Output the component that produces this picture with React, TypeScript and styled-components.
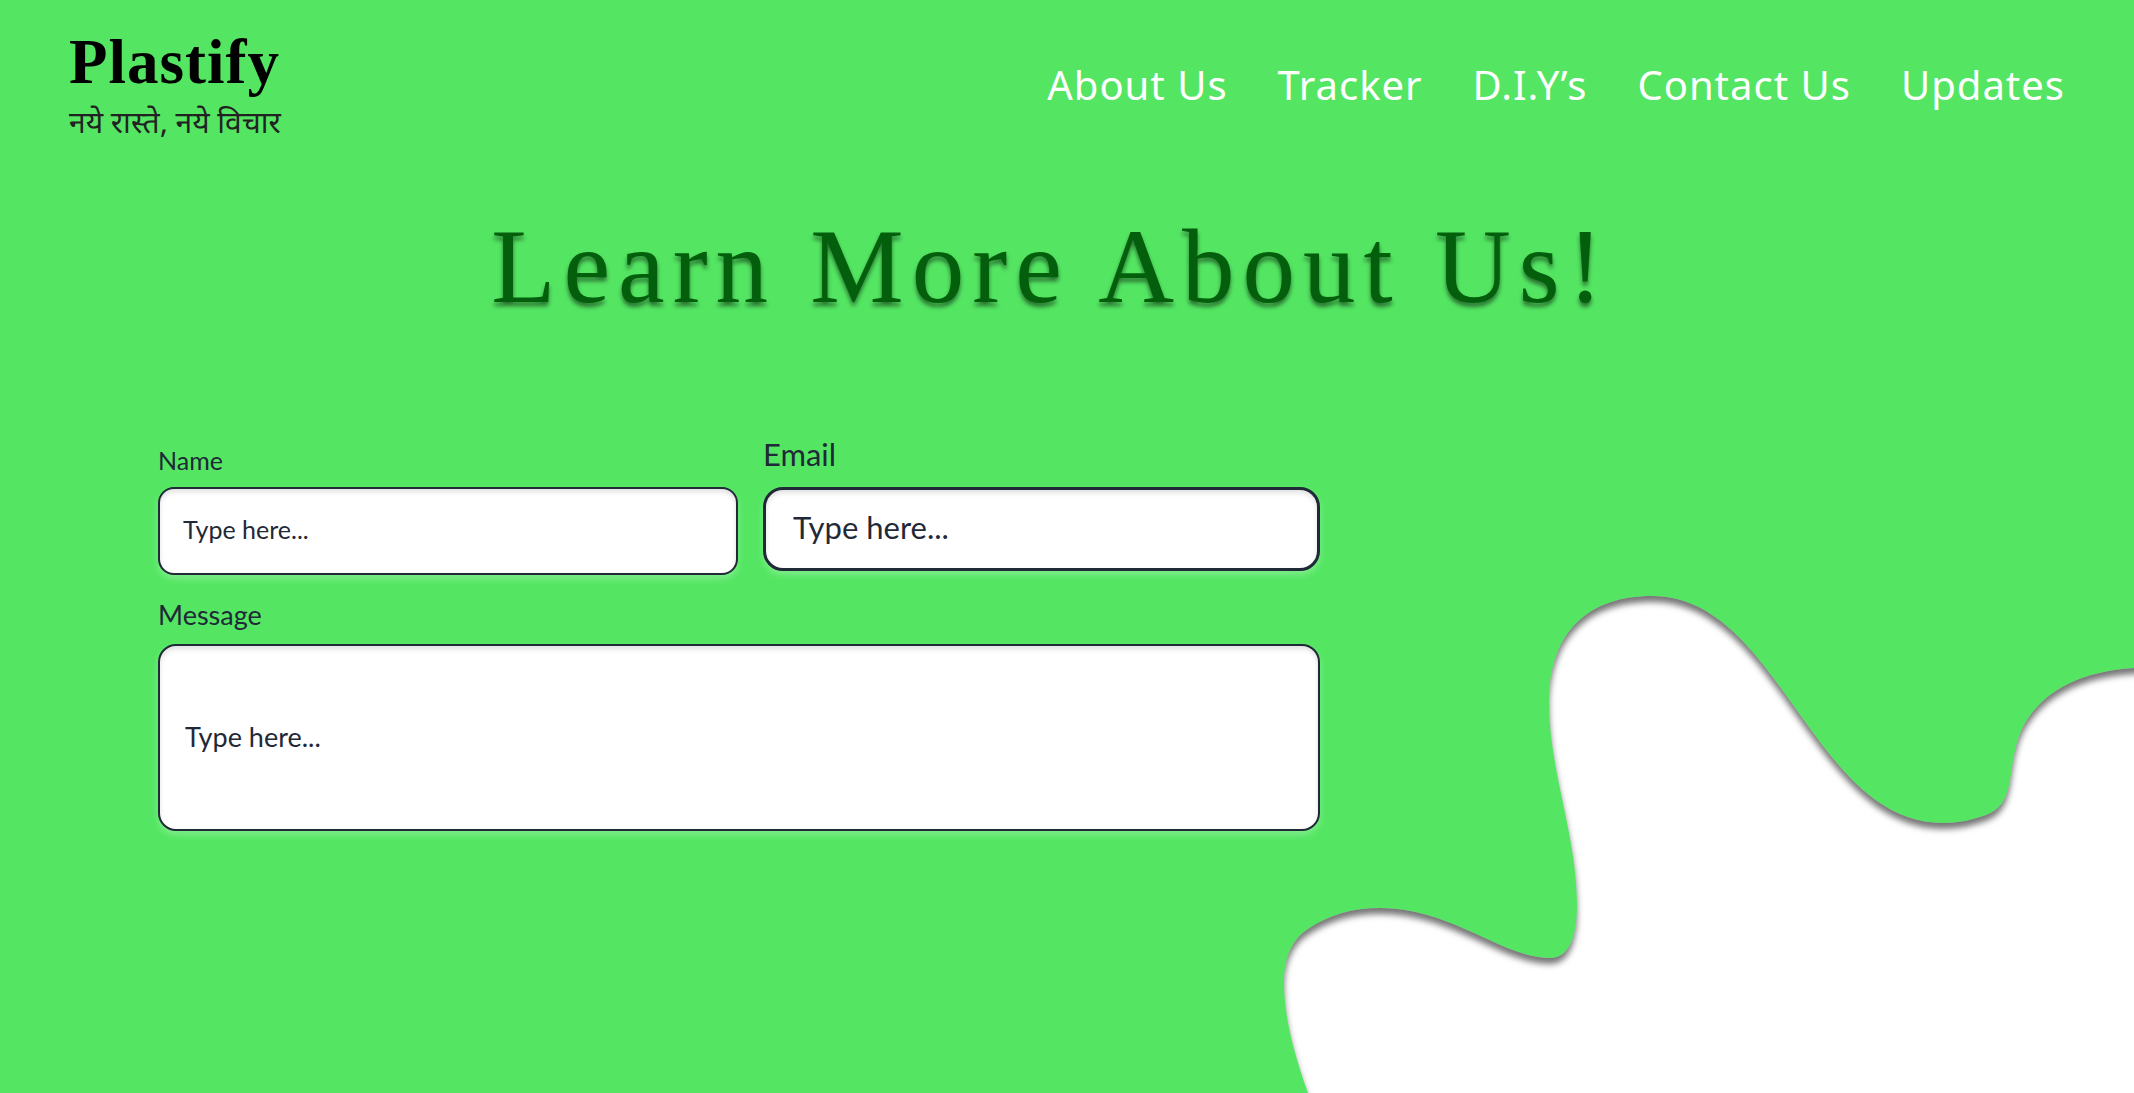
import React from "react";
import styled, { createGlobalStyle } from "styled-components";

const GlobalStyle = createGlobalStyle`
  *, *::before, *::after { box-sizing: border-box; }
  body {
    margin: 0;
    background: #54e663;
    font-family: Lato, "Open Sans", sans-serif;
    color: #1f2937;
  }
`;

const Page = styled.div`
  position: relative;
  display: flex;
  flex-direction: column;
  min-height: 100vh;
  overflow: hidden;
  background: #54e663;
`;

const Header = styled.header`
  display: flex;
  justify-content: space-between;
  align-items: flex-start;
  padding: 26px 69px 0;
`;

const Brand = styled.a`
  display: flex;
  flex-direction: column;
  color: #000;
  text-decoration: none;
`;

const BrandName = styled.span`
  font: 700 63px/72px "Liberation Serif", serif;
  letter-spacing: 1px;
`;

const Tagline = styled.span`
  font: 400 30px/56px "Noto Sans Devanagari", "Noto Sans", sans-serif;
  color: #222;
  white-space: nowrap;
`;

const Nav = styled.nav`
  display: flex;
  gap: 50px;
  padding-top: 32px;
`;

const NavLink = styled.a`
  font: 400 40px/54px "Noto Sans", sans-serif;
  letter-spacing: 1px;
  color: #fff;
  text-decoration: none;
  white-space: nowrap;
`;

const Title = styled.h1`
  margin: 53px 0 0;
  padding-right: 32px;
  font: 400 105px/120px "Liberation Serif", serif;
  letter-spacing: 8px;
  text-align: center;
  color: #045f0c;
  text-shadow: 0 4px 4px rgba(0, 0, 0, 0.5);
`;

const Form = styled.form`
  position: relative;
  z-index: 1;
  display: grid;
  grid-template-columns: 580fr 557fr;
  gap: 23px 25px;
  align-items: start;
  width: 100%;
  max-width: 1320px;
  margin-top: 108px;
  padding-left: 158px;
`;

const Field = styled.div<{ $wide?: boolean }>`
  display: flex;
  flex-direction: column;
  grid-column: ${(p) => (p.$wide ? "1 / -1" : "auto")};
`;

const sizes = {
  small: { font: 25, line: 30, gap: 12, radius: 16, border: 2, pad: 23 },
  medium: { font: 27, line: 32, gap: 13, radius: 18, border: 2, pad: 25 },
  large: { font: 31, line: 36, gap: 15, radius: 20, border: 3, pad: 27 },
};

type Size = keyof typeof sizes;

const Label = styled.label<{ $size: Size; $tall?: boolean }>`
  display: flex;
  align-items: flex-end;
  min-height: ${(p) => (p.$tall ? 52 : 46)}px;
  padding-bottom: ${(p) => sizes[p.$size].gap}px;
  font-size: ${(p) => sizes[p.$size].font}px;
  line-height: ${(p) => sizes[p.$size].line}px;
`;

const Input = styled.input<{ $size: Size; $height: number }>`
  width: 100%;
  height: ${(p) => p.$height}px;
  padding: 0 ${(p) => sizes[p.$size].pad}px 4px;
  border: ${(p) => sizes[p.$size].border}px solid #1f2937;
  border-radius: ${(p) => sizes[p.$size].radius}px;
  background: #fff;
  box-shadow: 0 4px 6px rgba(255, 255, 255, 0.25), inset 0 3px 5px rgba(0, 0, 0, 0.12);
  font: inherit;
  font-size: ${(p) => sizes[p.$size].font}px;
  color: #1f2937;
  outline: none;

  &::placeholder {
    color: #1f2937;
    opacity: 1;
  }
`;

const TextArea = styled(Input)`
  padding-top: 75px;
  line-height: 32px;
  resize: none;
  overflow: hidden;
`;

const Splash = styled.svg`
  position: absolute;
  right: 0;
  bottom: 0;
  width: 864px;
  height: 513px;
  pointer-events: none;
`;

const links = ["About Us", "Tracker", "D.I.Y’s", "Contact Us", "Updates"];

export default function App() {
  return (
    <Page>
      <GlobalStyle />
      <Header>
        <Brand href="#">
          <BrandName>Plastify</BrandName>
          <Tagline lang="hi">नये रास्ते, नये विचार</Tagline>
        </Brand>
        <Nav>
          {links.map((text) => (
            <NavLink key={text} href="#">
              {text}
            </NavLink>
          ))}
        </Nav>
      </Header>

      <Title>Learn More About Us!</Title>

      <Form>
        <Field>
          <Label htmlFor="name" $size="small" $tall>
            Name
          </Label>
          <Input id="name" type="text" placeholder="Type here..." $size="small" $height={88} />
        </Field>
        <Field>
          <Label htmlFor="email" $size="large" $tall>
            Email
          </Label>
          <Input id="email" type="email" placeholder="Type here..." $size="large" $height={84} />
        </Field>
        <Field $wide>
          <Label htmlFor="message" $size="medium">
            Message
          </Label>
          <TextArea as="textarea" id="message" placeholder="Type here..." $size="medium" $height={187} />
        </Field>
      </Form>

      <Splash viewBox="1270 580 864 513" aria-hidden="true">
        <defs>
          <filter
            id="inner-shadow"
            filterUnits="userSpaceOnUse"
            x="1240"
            y="560"
            width="960"
            height="600"
            colorInterpolationFilters="sRGB"
          >
            <feOffset in="SourceAlpha" dy="6" />
            <feGaussianBlur stdDeviation="3" result="moved" />
            <feComposite in="SourceAlpha" in2="moved" operator="out" result="edge" />
            <feFlood floodColor="#000" floodOpacity="0.54" />
            <feComposite in2="edge" operator="in" result="shade" />
            <feMerge>
              <feMergeNode in="SourceGraphic" />
              <feMergeNode in="shade" />
            </feMerge>
          </filter>
        </defs>
        <path
          filter="url(#inner-shadow)"
          fill="#fff"
          d="M1322 1130 L1308 1093 C1294 1054 1284 1016 1284 983 C1284 957 1292 938 1311 927 C1330 915 1352 908 1380 908 C1452 908 1502 958 1550 958 C1572 958 1577 930 1577 905 C1577 835 1549 770 1549 703 C1549 630 1590 596 1652 596 C1780 596 1812 823 1943 823 C1958 823 1972 820 1986 815 C2020 803 2004 760 2025 723 C2046 688 2085 671 2134 668 L2180 666 V1130 Z"
        />
      </Splash>
    </Page>
  );
}
